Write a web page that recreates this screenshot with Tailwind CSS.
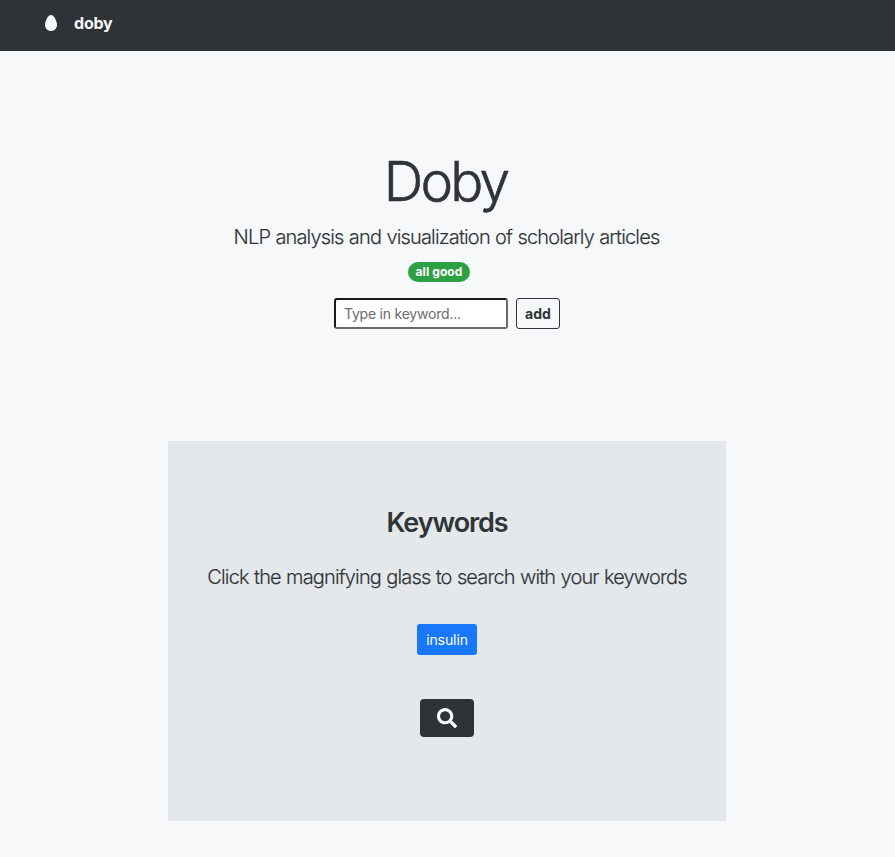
<!DOCTYPE html>
<html lang="en">
<head>
<meta charset="utf-8">
<title>doby</title>
<script src="https://cdn.jsdelivr.net/npm/@tailwindcss/browser@4"></script>
</head>
<body class="min-h-[857px] overflow-hidden bg-[#f7f8fa] font-['Inter','Liberation_Sans',sans-serif] text-[#2f3437]">
<nav class="flex h-[51px] items-start gap-[17px] bg-[#2e3338] pt-[11px] pl-[45px] text-[#f8f9fa]">
  <svg class="mt-1 h-4 w-3" viewBox="0 0 384 512" fill="currentColor"><path d="M192 0C86 0 0 214 0 320s86 192 192 192 192-86 192-192S298 0 192 0z"/></svg>
  <span class="text-base leading-6 font-bold tracking-[-0.2px]">doby</span>
</nav>
<main class="flex flex-col items-center pr-px">
  <header class="flex flex-col items-center pt-[97px]">
    <h1 class="pr-[3px] text-[55px] leading-[67px] font-light tracking-[-2.8px] [-webkit-text-stroke:0.6px_#2f3437]">Doby</h1>
    <p class="mt-[7px] pr-px text-xl leading-[30px] font-light tracking-[-0.84px] whitespace-nowrap [-webkit-text-stroke:0.15px_#2f3437] [word-spacing:0.5px]">NLP analysis and visualization of scholarly articles</p>
    <span class="mt-[10px] mr-4 flex h-5 w-[62px] items-center justify-center rounded-full bg-[#2da044] text-xs font-bold tracking-[0.1px] text-white">all good</span>
    <form class="mt-4 flex gap-2">
      <input class="h-[31px] w-[174px] rounded-[3px] border-2 border-t-[#1a1a1a] border-r-[#6b6b6b] border-b-[#6b6b6b] border-l-[#1a1a1a] bg-white px-2 text-sm tracking-[-0.22px] placeholder:text-[#6c6c6c] placeholder:opacity-100" placeholder="Type in keyword...">
      <button type="button" class="h-[31px] w-11 rounded-[3px] border border-[#2f3437] text-sm font-bold">add</button>
    </form>
  </header>
  <section class="mt-[112px] flex h-[380px] w-[558px] flex-col items-center bg-[#e4e8ea] pt-[65px]">
    <h2 class="text-[27px] leading-[34px] font-semibold tracking-[-1.1px]">Keywords</h2>
    <p class="mt-[22px] text-xl leading-[30px] font-light tracking-[-0.85px] whitespace-nowrap [-webkit-text-stroke:0.15px_#2f3437] [word-spacing:0.5px]">Click the magnifying glass to search with your keywords</p>
    <button class="mt-8 h-[31px] w-[60px] rounded-[3px] bg-[#1877fb] text-sm tracking-[-0.1px] text-white">insulin</button>
    <button class="mt-11 flex h-[38px] w-[54px] items-center justify-center rounded bg-[#2e3338] text-white" aria-label="Search">
      <svg class="h-5 w-5" viewBox="0 0 512 512" fill="currentColor"><path d="M505 442.7L405.3 343c-4.5-4.5-10.6-7-17-7H372c27.6-35.3 44-79.7 44-128C416 93.1 322.9 0 208 0S0 93.1 0 208s93.1 208 208 208c48.3 0 92.7-16.4 128-44v16.3c0 6.4 2.5 12.5 7 17l99.7 99.7c9.4 9.4 24.6 9.4 33.9 0l28.3-28.3c9.4-9.4 9.4-24.6.1-34zM208 336c-70.7 0-128-57.2-128-128 0-70.7 57.2-128 128-128 70.7 0 128 57.2 128 128 0 70.7-57.2 128-128 128z"/></svg>
    </button>
  </section>
</main>
</body>
</html>
